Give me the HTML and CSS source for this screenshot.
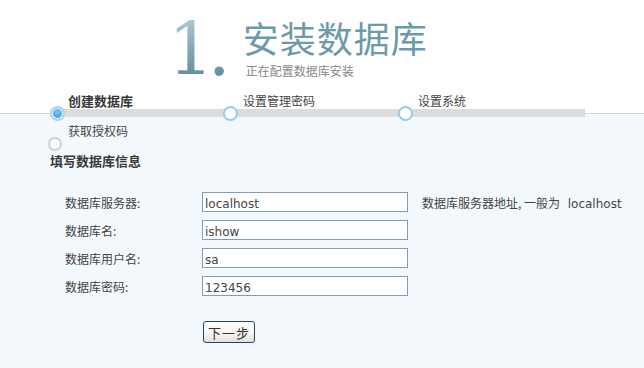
FILE: index.html
```html
<!DOCTYPE html>
<html>
<head>
    <title>安装数据库</title>
    <link rel="stylesheet" href="styles.css">
</head>
<body>
    <div id="header">
        <div class="title">
            <span class="num">1.</span>
            <div class="title-text">
                <h1>安装数据库</h1>
                <p class="sub">正在配置数据库安装</p>
            </div>
        </div>
        <div class="step-labels">
            <span class="step-label current">创建数据库</span>
            <span class="step-label">设置管理密码</span>
            <span class="step-label">设置系统</span>
        </div>
        <div class="track-line">
            <div class="track">
                <span class="dot active"></span>
                <span class="dot second"></span>
                <span class="dot third"></span>
            </div>
        </div>
    </div>

    <div id="content">
        <div class="sub-label">获取授权码</div>
        <span class="dot grey"></span>
        <h2>填写数据库信息</h2>

        <form id="dbForm">
            <div class="row">
                <label for="dbServer">数据库服务器:</label>
                <input class="input" type="text" id="dbServer" value="localhost">
                <span class="hint">数据库服务器地址, 一般为 <span class="hint-host">localhost</span></span>
            </div>
            <div class="row">
                <label for="dbName">数据库名:</label>
                <input class="input" type="text" id="dbName" value="ishow">
            </div>
            <div class="row">
                <label for="dbUser">数据库用户名:</label>
                <input class="input" type="text" id="dbUser" value="sa">
            </div>
            <div class="row">
                <label for="dbPass">数据库密码:</label>
                <input class="input" type="text" id="dbPass" value="123456">
            </div>
            <button class="botao" type="button">下一步</button>
        </form>
    </div>
</body>
</html>
```

FILE: styles.css
```css
body {
    margin: 0;
    background: #f3f8fc;
    font-family: "Noto Sans CJK SC", "DejaVu Sans", sans-serif;
    font-size: 12px;
    color: #444;
}
#header {
    background: #fff;
    height: 115px;
    padding-top: 14px;
    box-sizing: border-box;
}
.title {
    display: flex;
    margin-left: 168px;
    height: 79px;
}
.num {
    font-family: "DejaVu Serif", serif;
    font-size: 72px;
    line-height: 72px;
    height: 72px;
    letter-spacing: -6px;
    background: linear-gradient(to bottom, #b7cdd7 0%, #86a9b9 45%, #55879c 100%);
    -webkit-background-clip: text;
    background-clip: text;
    color: transparent;
}
.title-text {
    margin-left: 18px;
    margin-top: 3px;
}
h1 {
    margin: 0;
    font-size: 36px;
    line-height: 40px;
    font-weight: normal;
    color: #6b9aab;
    letter-spacing: 1px;
}
.sub {
    margin: 6px 0 0 3px;
    font-size: 12px;
    line-height: 16px;
    color: #888;
}
.step-labels {
    display: flex;
    padding-left: 68px;
    line-height: 16px;
    height: 16px;
}
.step-label {
    width: 175px;
    color: #444;
}
.step-label.current {
    font-weight: bold;
    font-size: 13px;
    color: #3a3a3a;
}
.track-line {
    height: 8px;
    margin-bottom: -2px;
    background: linear-gradient(to bottom, transparent 4px, #c3d8e1 4px, #c3d8e1 5px, transparent 5px);
}
.track {
    margin-left: 50px;
    width: 535px;
    height: 8px;
    background: #dcdcdc;
    display: flex;
    align-items: center;
}
.dot {
    display: block;
    width: 15px;
    height: 15px;
    box-sizing: border-box;
    border-radius: 50%;
    border: 2px solid #93cbec;
    background: #fff;
    flex: none;
}
.dot.active {
    border-color: #a9d5ef;
    background: radial-gradient(circle at 50% 35%, #7cc3f0 0%, #3f9fe2 70%);
    box-shadow: inset 0 0 0 1px #fff;
}
.dot.second {
    margin-left: 158px;
}
.dot.third {
    margin-left: 160px;
}
#content {
    padding-top: 9px;
}
.sub-label {
    margin-left: 68px;
    line-height: 14px;
    height: 14px;
}
.dot.grey {
    width: 14px;
    height: 14px;
    margin: -1px 0 0 48px;
    border-color: #cfcfcf;
}
h2 {
    margin: 2px 0 0 50px;
    font-size: 13px;
    line-height: 16px;
    color: #3a3a3a;
}
#dbForm {
    margin-top: 23px;
    padding-left: 65px;
}
.row {
    display: flex;
    align-items: center;
    height: 20px;
    margin-bottom: 8px;
}
.row label {
    width: 137px;
}
.input {
    width: 206px;
    height: 20px;
    box-sizing: border-box;
    border: 1px solid #7f9db9;
    padding: 3px 2px 0;
    margin: 0;
    font-family: "DejaVu Sans", sans-serif;
    font-size: 12px;
    color: #444;
    background: #fff;
}
.hint {
    margin-left: 14px;
}
.hint-host {
    margin-left: 5px;
    font-family: "DejaVu Sans", sans-serif;
}
.botao {
    display: block;
    margin: 25px 0 0 138px;
    width: 52px;
    height: 22px;
    padding: 0;
    border: 1px solid #23476b;
    border-radius: 3px;
    background: linear-gradient(to bottom, #ffffff 0%, #f4f3ee 60%, #e2e0d6 100%);
    font-family: "Noto Sans CJK SC", sans-serif;
    font-size: 13px;
    letter-spacing: 1px;
    color: #333;
}
```
